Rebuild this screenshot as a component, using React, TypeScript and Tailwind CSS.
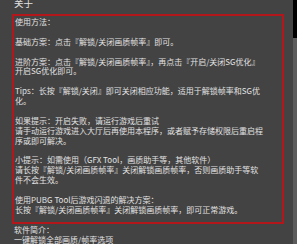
import React from 'react';

const lines: string[] = [
  '使用方法：',
  '',
  '基础方案：点击『解锁/关闭画质帧率』即可。',
  '',
  '进阶方案：点击『解锁/关闭画质帧率』，再点击『开启/关闭SG优化』',
  '开启SG优化即可。',
  '',
  'Tips：长按『解锁/关闭』即可关闭相应功能，适用于解锁帧率和SG优',
  '化。',
  '',
  '如果提示：开启失败，请运行游戏后重试',
  '请手动运行游戏进入大厅后再使用本程序，或者赋予存储权限后重启程',
  '序或即可解决。',
  '',
  '小提示：如需使用（GFX Tool，画质助手等，其他软件）',
  '请长按『解锁/关闭画质帧率』关闭解锁画质帧率，否则画质助手等软',
  '件不会生效。',
  '',
  '使用PUBG Tool后游戏闪退的解决方案：',
  '长按『解锁/关闭画质帧率』关闭解锁画质帧率，即可正常游戏。',
];

export default function App() {
  return (
    <div
      className="relative w-[297px] h-[244px] overflow-hidden bg-[#434343] text-[#e2e2e2]"
      style={{ fontFamily: '"Noto Sans CJK SC", "Noto Sans", sans-serif' }}
    >
      <div className="pl-[12px] pr-[13px]">
        <div className="-mt-[2px] h-[16px] pl-[2px] text-[9.5px] leading-[11px]">关于</div>
        <div className="border-2 border-[#b3171c] pl-[1px] pt-[1px] pb-[7px]">
          {lines.map((line, i) => (
            <div key={i} className="h-[9.9px] text-[8px] leading-[9.9px] whitespace-nowrap">
              {line}
            </div>
          ))}
        </div>
        <div className="pl-[2px] pt-[1px] text-[8px] leading-[10px]">
          <div>软件简介：</div>
          <div>一键解锁全部画质/帧率选项</div>
        </div>
      </div>
      {/* scrollbar */}
      <div className="absolute right-0 top-0 bottom-0 w-[4px] flex flex-col">
        <div className="h-[38px] bg-black" />
        <div className="flex-1 bg-[#5c5c5c]" />
      </div>
    </div>
  );
}
